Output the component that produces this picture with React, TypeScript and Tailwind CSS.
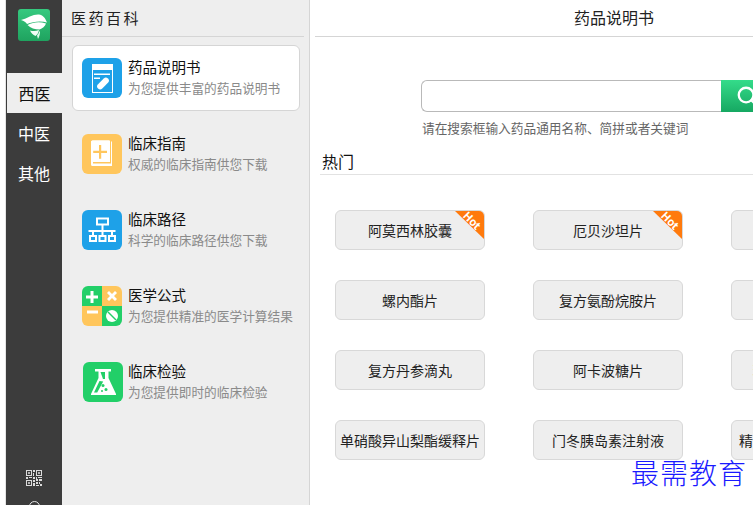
import { Search } from "lucide-react";

const font = { fontFamily: '"Noto Sans CJK SC", "Liberation Sans", sans-serif' };

function GuideIcon() {
  return (
    <svg viewBox="0 0 40 40" className="h-10 w-10">
      <rect width="40" height="40" rx="6" fill="#ffc65c" />
      <path d="M9 8a1.500 1.500 0 0 1 1.500-1.500H27V28H11v1.500h18v-22H30V32H10.500A1.500 1.500 0 0 1 9 30.500z" fill="#fff" />
      <path d="M9 8a1.500 1.500 0 0 1 1.500-1.500H28V28H9z" fill="#fff" />
      <path d="M17 11h2.200v5.800H25V19h-5.800v5.800H17V19h-5.800v-2.200H17z" fill="#ffc65c" />
    </svg>
  );
}

function LeafletIcon() {
  return (
    <svg viewBox="0 0 40 40" className="h-10 w-10">
      <rect width="40" height="40" rx="6" fill="#1ea1e8" />
      <path d="M10 6h21v29H10z" fill="#fff" />
      <path d="M11 12h19v22H11z" fill="#1ea1e8" />
      <path d="M12 15.500h16v1.500H12zM12 19.500h6v1.500h-6z" fill="#fff" />
      <rect x="14" y="22.500" width="14" height="6" rx="3" transform="rotate(-45 21 25.500)" fill="#fff" />
    </svg>
  );
}

function PathIcon() {
  return (
    <svg viewBox="0 0 40 40" className="h-10 w-10">
      <rect width="40" height="40" rx="6" fill="#1ea1e8" />
      <g fill="none" stroke="#fff" strokeWidth="2">
        <path d="M15 8.500h11v6H15zM8 26h6v5H8zM17.500 26h6v5h-6zM27 26h6v5h-6z" />
        <path d="M20.500 14.500v6.500M6.500 21h27M11 21v5M20.500 21v5M30 21v5" />
      </g>
    </svg>
  );
}

function FormulaIcon() {
  return (
    <svg viewBox="0 0 40 40" className="h-10 w-10">
      <path d="M6 0h14v20H0V6a6 6 0 0 1 6-6z" fill="#22cf68" />
      <path d="M20 0h14a6 6 0 0 1 6 6v14H20z" fill="#ffc65c" />
      <path d="M0 20h20v20H6a6 6 0 0 1-6-6z" fill="#ffc65c" />
      <path d="M20 20h20v14a6 6 0 0 1-6 6H20z" fill="#22cf68" />
      <path d="M8.500 5h3v4.500H16v3h-4.500V17h-3v-4.500H4v-3h4.500z" fill="#fff" />
      <path d="M25 7l2-2 3 3 3-3 2 2-3 3 3 3-2 2-3-3-3 3-2-2 3-3z" fill="#fff" />
      <path d="M5 24.500h11v3H5z" fill="#fff" />
      <circle cx="30" cy="30" r="6" fill="#fff" />
      <path d="M26 26l8 8" stroke="#22cf68" strokeWidth="1.500" />
    </svg>
  );
}

function FlaskIcon() {
  return (
    <svg viewBox="0 0 40 40" className="h-10 w-10">
      <rect width="40" height="40" rx="6" fill="#22cf68" />
      <path d="M12 7h16v2.500h-2.500V16l7.500 16v1H8v-1l7.500-16V9.500H12z" fill="#fff" />
      <path d="M17.500 10h4.500v7l-2 0z" fill="#22cf68" />
      <path d="M16.500 19l-5.500 11.500h3.200l6-11z" fill="#22cf68" />
      <circle cx="20" cy="23.500" r="1.500" fill="#22cf68" />
      <circle cx="23" cy="27.500" r="1.500" fill="#22cf68" />
      <circle cx="19" cy="29" r="1" fill="#22cf68" />
    </svg>
  );
}

const categories = [
  { title: "药品说明书", sub: "为您提供丰富的药品说明书", icon: <LeafletIcon />, active: true },
  { title: "临床指南", sub: "权威的临床指南供您下载", icon: <GuideIcon /> },
  { title: "临床路径", sub: "科学的临床路径供您下载", icon: <PathIcon /> },
  { title: "医学公式", sub: "为您提供精准的医学计算结果", icon: <FormulaIcon /> },
  { title: "临床检验", sub: "为您提供即时的临床检验", icon: <FlaskIcon />, nudge: true },
];

const drugs = [
  { name: "阿莫西林胶囊", hot: true },
  { name: "厄贝沙坦片", hot: true },
  { name: "" },
  { name: "螺内酯片" },
  { name: "复方氨酚烷胺片" },
  { name: "" },
  { name: "复方丹参滴丸" },
  { name: "阿卡波糖片" },
  { name: "苯磺酸氨氯地平片", extra: "pl-[5px]" },
  { name: "单硝酸异山梨酯缓释片" },
  { name: "门冬胰岛素注射液" },
  { name: "精蛋白锌重组人胰岛素", extra: "pl-[6px]" },
];

function Logo() {
  return (
    <svg viewBox="0 0 32 32" className="h-8 w-8">
      <defs>
        <linearGradient id="logoBg" x1="0" y1="0" x2="0" y2="1">
          <stop offset="0" stopColor="#35c97f" />
          <stop offset="1" stopColor="#1fa35f" />
        </linearGradient>
      </defs>
      <rect width="32" height="32" rx="3" fill="url(#logoBg)" />
      <path d="M3 11C10 9 15 5 21 5.500c3.500.5 6.500 3.500 8 8-6-2-14-1-20 1.500-1-2-3-3-6-4z" fill="#fff" />
      <path d="M9.500 16c6-3 12-3.500 18.500-1.500-1 3-3.500 5-6.500 6-4.500 0-9-1.500-12-4.500z" fill="#fff" />
      <path d="M12 21.500c3 .8 6 .8 9-.5-.5 2.500-1.500 4.500-3.500 6-2.500-1-4.500-3-5.500-5.500z" fill="#f2fdf7" />
      <path d="M19 26.500c1-1 2-3 2.800-5 .7 2.500-.3 6-1.800 8.500z" fill="#e2f9ec" />
    </svg>
  );
}

function QrIcon() {
  return (
    <svg viewBox="0 0 16 16" className="h-4 w-4" shapeRendering="crispEdges">
      <path
        fill="#dcdcdc"
        d="M0 0h6v6H0zM10 0h6v6h-6zM0 10h6v6H0zM7 0h2v2H7zM7 3h1v3H7zM0 7h2v2H0zM3 7h3v1H3zM7 7h2v2H7zM10 7h1v2h-1zM12 7h4v1h-4zM7 10h2v2H7zM10 9h2v2h-2zM13 9h3v2h-3zM7 13h2v3H7zM10 12h2v2h-2zM13 12h1v2h-1zM10 15h3v1h-3zM14 14h2v2h-2z"
      />
      <path fill="#3c3c3c" d="M1 1h4v4H1zM11 1h4v4h-4zM1 11h4v4H1z" />
      <path fill="#b5b5b5" d="M2 2h2v2H2zM12 2h2v2h-2zM2 12h2v2H2z" />
    </svg>
  );
}

export default function App() {
  return (
    <div style={font} className="flex h-[505px] w-[753px] overflow-hidden bg-white">
      <div className="w-[6px] shrink-0 border-r border-[#e4e4e4] bg-white" />

      <aside className="flex w-[56px] shrink-0 flex-col bg-[#3c3c3c]">
        <div className="ml-3 mt-[9px]">
          <Logo />
        </div>
        <nav className="mt-8 flex flex-col">
          <div className="ml-[1px] flex h-10 items-center justify-center bg-[#eeeeee] text-base text-[#111]">西医</div>
          <div className="flex h-10 items-center justify-center text-base text-white">中医</div>
          <div className="flex h-10 items-center justify-center text-base text-white">其他</div>
        </nav>
        <div className="mt-[277px] flex flex-col items-center gap-[15px]">
          <QrIcon />
          <div className="h-[11px] w-[11px] rounded-full border border-[#e5e5e5]" />
        </div>
      </aside>

      <section className="w-[248px] shrink-0 border-r border-[#d5d5d5] bg-[#eeeeee]">
        <div className="mr-[5px] flex h-[37px] items-center border-b border-[#d5d5d5] pl-[9px] text-[15px] tracking-[2.500px] text-[#222]">
          医药百科
        </div>
        <ul className="mt-2 flex flex-col gap-[10px] pl-[10px] pr-[9px]">
          {categories.map((item) => (
            <li
              key={item.title}
              className={`flex h-[66px] items-center rounded-md border pl-[9px] ${
                item.active ? "border-[#d5d5d5] bg-white" : "border-transparent"
              }`}
            >
              <div className={item.nudge ? "ml-[1px] -mr-[1px]" : ""}>{item.icon}</div>
              <div className="-mt-[2px] ml-[6px] whitespace-nowrap">
                <div className="text-[14.500px] leading-[20px] text-[#111]">{item.title}</div>
                <div className="mt-[1px] text-[12.700px] leading-[20px] text-[#8a8a8a]">{item.sub}</div>
              </div>
            </li>
          ))}
        </ul>
      </section>

      <main className="min-w-0 flex-1 overflow-hidden">
        <div className="ml-[5px] flex h-[37px] items-center justify-center border-b border-[#d5d5d5] pb-[2px] pl-[160px] text-base text-[#222]">
          药品说明书
        </div>

        <div className="ml-[111px] mt-[43px] flex h-8 w-[400px]">
          <div className="h-8 w-[300px] rounded-l-md border border-r-0 border-[#b9b9b9] bg-white" />
          <button
            type="button"
            className="flex h-8 w-[100px] items-center justify-start bg-gradient-to-b from-[#34dc8a] to-[#16a862] pl-[15px] text-white"
          >
            <Search className="h-[22px] w-[22px]" strokeWidth={2.5} />
          </button>
        </div>
        <p className="ml-[112px] mt-[6px] text-[12.700px] leading-5 text-[#666]">请在搜索框输入药品通用名称、简拼或者关键词</p>

        <div className="ml-[10px] mt-[10px] h-[27px] border-b border-[#e2e2e2] pl-[2px] text-base leading-[26px] text-[#111]">
          热门
        </div>

        <div className="ml-[25px] mt-[35px] grid w-[546px] grid-cols-[150px_150px_150px] gap-x-[48px] gap-y-[30px]">
          {drugs.map((drug, index) => (
            <div
              key={index}
              className={`relative flex h-10 items-center justify-center overflow-hidden whitespace-nowrap rounded-md border border-[#d8d8d8] bg-[#eeeeee] text-sm text-[#222] ${drug.extra ?? ""}`}
            >
              {drug.name}
              {drug.hot ? (
                <div className="absolute right-0 top-0 h-[28px] w-[29px] bg-[#ff7a0d] [clip-path:polygon(0_0,100%_0,100%_100%)]">
                  <span className="absolute left-[8px] top-[3px] rotate-45 text-[11px] font-bold leading-3 text-white">Hot</span>
                </div>
              ) : null}
            </div>
          ))}
        </div>
      </main>

      <div
        className="absolute left-[631px] top-[454px] text-[28px] font-light leading-9 tracking-[1px] text-[#1a1aff]"
        style={{ fontFamily: '"Noto Sans CJK SC", serif' }}
      >
        最需教育
      </div>
    </div>
  );
}
